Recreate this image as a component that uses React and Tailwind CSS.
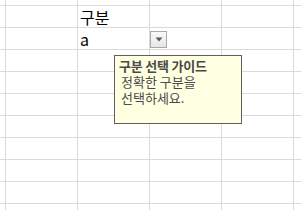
import React from 'react';

const cols = [6, 72, 72, 72, 72, 72];
const rows = [6, 22, 22, 22, 22, 22, 22, 22, 22, 22, 22];

function Cell({ r, c }) {
  let content = null;
  if (r === 1 && c === 2) content = <span className="text-[16px] leading-none text-black">구분</span>;
  if (r === 2 && c === 2) content = <span className="text-[16px] leading-none text-black">a</span>;
  return (
    <div className="border-r border-b border-[#dadada] flex items-center pl-[2px] overflow-hidden">
      {content}
    </div>
  );
}

export default function App() {
  return (
    <div className="relative w-[301px] h-[210px] overflow-hidden bg-white font-['Noto_Sans_CJK_KR','Noto_Sans',sans-serif]">
      <div className="grid grid-cols-[6px_72px_72px_72px_72px_72px] grid-rows-[6px_repeat(10,22px)]">
        {rows.map((_, r) =>
          cols.map((_, c) => <Cell key={`${r}-${c}`} r={r} c={c} />)
        )}
      </div>

      {/* dropdown button */}
      <div className="absolute left-[150px] top-[31px] w-[17px] h-[17px] border border-[#a9a9a9] bg-gradient-to-b from-[#fafafa] to-[#e6e6e6] flex items-center justify-center">
        <svg width="8" height="5" viewBox="0 0 8 5">
          <path d="M0.5 0.5 H7.5 L4 4.5 Z" fill="#5a5a5a" />
        </svg>
      </div>

      {/* comment tooltip */}
      <div className="absolute left-[114px] top-[55px] w-[128px] h-[69px] border border-[#5f5f5f] bg-[#ffffe1] pl-[4px] pt-[2px] text-[#4a4a4a]">
        <div className="text-[13px] font-bold leading-[16px] tracking-[-0.2px]">구분 선택 가이드</div>
        <div className="text-[13px] leading-[16px] pl-[2px]">정확한 구분을</div>
        <div className="text-[13px] leading-[16px] pl-[2px]">선택하세요.</div>
      </div>
    </div>
  );
}
